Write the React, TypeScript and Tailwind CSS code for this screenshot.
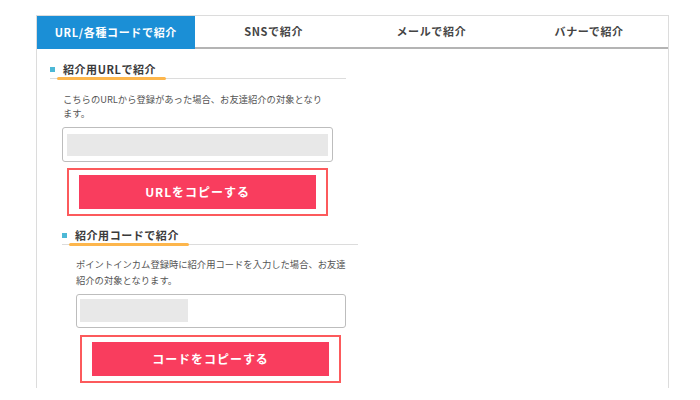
import React from 'react';

const font = { fontFamily: '"Noto Sans CJK JP", "Noto Sans", sans-serif' };

const tabs = ['URL/各種コードで紹介', 'SNSで紹介', 'メールで紹介', 'バナーで紹介'];

function Heading({ title, lineWidth }: { title: string; lineWidth: string }) {
  return (
    <div className="relative flex h-[18px] w-[296px] items-center border-b border-[#dcdcdc]">
      <span className="h-[5px] w-[5px] shrink-0 bg-[#4db8d6]" />
      <span className="ml-[8px] text-[11px] font-bold leading-none tracking-[0.05em] text-[#3a3a3a]">{title}</span>
      <span className={`absolute bottom-[-2px] left-[7px] h-[3.5px] rounded-full bg-[#fdb64c] ${lineWidth}`} />
    </div>
  );
}

function CopyButton({ label }: { label: string }) {
  return (
    <div className="h-[48px] w-[261px] border-2 border-[#fc5a5c] px-[10px] py-[5px]">
      <button className="flex h-[34px] w-full items-center justify-center bg-[#f93d5e] text-[12px] font-bold tracking-[0.08em] text-white">
        {label}
      </button>
    </div>
  );
}

export default function App() {
  return (
    <div className="min-h-[400px] bg-white pt-[15px]" style={font}>
      <div className="ml-[36px] h-[373px] w-[633px] border-x border-t border-[#dcdcdc]">
        {/* Tabs */}
        <div className="flex h-[33px]">
          {tabs.map((t, i) => (
            <div
              key={t}
              className={
                i === 0
                  ? 'flex flex-1 items-center justify-center bg-[#1b8fd6] text-[11px] font-bold tracking-[0.06em] text-white'
                  : 'flex flex-1 items-center justify-center border-b-2 border-[#b4b4b4] text-[11px] font-bold tracking-[0.06em] text-[#444]'
              }
            >
              {t}
            </div>
          ))}
        </div>

        {/* URL section */}
        <div className="pl-[13px] pt-[12px]">
          <Heading title="紹介用URLで紹介" lineWidth="w-[109px]" />
          <p className="mt-[13px] ml-[13px] w-[268px] text-[9.3px] leading-[14px] text-[#555]">
            こちらのURLから登録があった場合、お友達紹介の対象となります。
          </p>
          <div className="mt-[7px] ml-[12px] h-[35px] w-[271px] rounded-[3px] border border-[#bdbdbd] px-[4px] pt-[6px]">
            <div className="h-[22px] w-full bg-[#e8e8e8]" />
          </div>
          <div className="mt-[6px] ml-[17px]">
            <CopyButton label="URLをコピーする" />
          </div>
        </div>

        {/* Code section */}
        <div className="pl-[25px] pt-[11px]">
          <Heading title="紹介用コードで紹介" lineWidth="w-[120px]" />
          <p className="mt-[11px] ml-[14px] w-[276px] text-[9.3px] leading-[16px] text-[#555]">
            ポイントインカム登録時に紹介用コードを入力した場合、お友達紹介の対象となります。
          </p>
          <div className="mt-[6px] ml-[14px] h-[34px] w-[270px] rounded-[3px] border border-[#bdbdbd] px-[3px] pt-[4px]">
            <div className="h-[23px] w-[108px] bg-[#e8e8e8]" />
          </div>
          <div className="mt-[7px] ml-[18px]">
            <CopyButton label="コードをコピーする" />
          </div>
        </div>
      </div>
    </div>
  );
}
